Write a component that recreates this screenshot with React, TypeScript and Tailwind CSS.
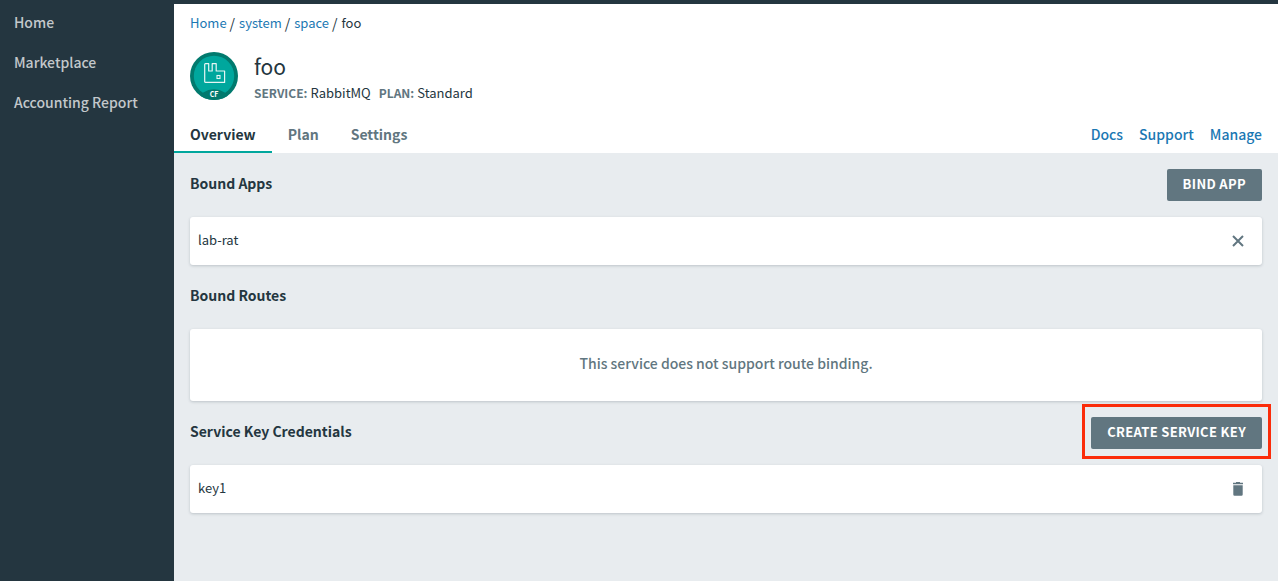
import type { ReactNode } from "react";

const navItems = ["Home", "Marketplace", "Accounting Report"];
const crumbs = ["Home", "system", "space"];
const links = ["Docs", "Support", "Manage"];

function ServiceLogo() {
  return (
    <svg viewBox="0 0 48 48" className="size-12 shrink-0" role="img" aria-label="RabbitMQ">
      <defs>
        <clipPath id="disc">
          <circle cx="24" cy="24" r="24" />
        </clipPath>
      </defs>
      <circle cx="24" cy="24" r="24" fill="#017a6e" />
      <circle cx="24" cy="24" r="20.2" fill="#00a79d" />
      <ellipse cx="24" cy="47" rx="14.5" ry="9.7" fill="#017a6e" clipPath="url(#disc)" />
      <path
        d="M15.4 11.7h3.3v7.3h3.5v-7.3h4v7.3h8.4v11.4H15.4a.7.7 0 0 1-.7-.7V12.4a.7.7 0 0 1 .7-.7z"
        fill="none"
        stroke="#e6f6f4"
        strokeWidth="1.2"
        strokeLinejoin="round"
      />
      <rect x="27" y="23.5" width="3" height="3" fill="none" stroke="#e6f6f4" strokeWidth="1.1" />
      <text x="24" y="45" textAnchor="middle" fontSize="7" fontWeight="700" fill="#fff">
        CF
      </text>
    </svg>
  );
}

function ActionButton({ children }: { children: ReactNode }) {
  return (
    <button
      type="button"
      className="h-8 rounded-xs bg-[#617680] px-4 pb-0.5 text-[13px] leading-6 font-bold tracking-wide text-white uppercase"
    >
      {children}
    </button>
  );
}

function Section({ title, action, children }: { title: string; action?: ReactNode; children: ReactNode }) {
  return (
    <section className="flex flex-col gap-4">
      <div className="flex h-8 items-center justify-between">
        <h2 className="pb-1 text-sm leading-6 font-bold">{title}</h2>
        {action}
      </div>
      <div className="rounded-[3px] bg-white shadow-[0_1px_3px_rgba(36,54,64,0.22)]">{children}</div>
    </section>
  );
}

function Row({ name, action, icon }: { name: string; action: string; icon: ReactNode }) {
  return (
    <div className="flex h-12 items-center justify-between pr-4 pl-2">
      <span className="pb-0.5 text-[13px] leading-5">{name}</span>
      <button type="button" aria-label={action} className="text-[#617680]">
        {icon}
      </button>
    </div>
  );
}

export default function App() {
  return (
    <div className="flex min-h-screen flex-col bg-[#e8ecef] font-['Noto_Sans_CJK_JP','Noto_Sans_CJK_SC',sans-serif] text-[#243640]">
      <div className="h-1 bg-[#243640]" />
      <div className="flex grow">
        <nav className="w-[174px] shrink-0 bg-[#243640] text-sm text-[#c3c8cb]">
          <ul>
            {navItems.map((item) => (
              <li key={item}>
                <a href="#" className="block px-[14px] pt-1.5 pb-2.5 leading-6 font-medium">
                  {item}
                </a>
              </li>
            ))}
          </ul>
        </nav>
        <div className="min-w-0 grow">
          <header className="bg-white">
            <nav aria-label="Breadcrumb" className="px-4 pt-[9px] text-[13px] leading-5">
              <ol className="flex gap-1">
                {crumbs.map((crumb) => (
                  <li key={crumb} className="flex gap-[3px]">
                    <a href="#" className="text-[#1b78b3]">
                      {crumb}
                    </a>
                    <span className="text-sm leading-5">/</span>
                  </li>
                ))}
                <li aria-current="page">foo</li>
              </ol>
            </nav>
            <div className="flex gap-4 px-4 pt-[19px]">
              <ServiceLogo />
              <div>
                <h1 className="pb-0.5 text-[21px] leading-7">foo</h1>
                <dl className="flex gap-2 pt-px text-[13px] leading-5">
                  <div className="flex gap-[3px]">
                    <dt className="text-xs leading-5 font-bold text-[#617680]">SERVICE:</dt>
                    <dd>RabbitMQ</dd>
                  </div>
                  <div className="flex gap-[3px]">
                    <dt className="text-xs leading-5 font-bold text-[#617680]">PLAN:</dt>
                    <dd>Standard</dd>
                  </div>
                </dl>
              </div>
            </div>
            <div className="flex items-end justify-between pt-[13px] text-sm leading-6">
              <div role="tablist" className="flex font-bold text-[#617680]">
                <button
                  type="button"
                  role="tab"
                  aria-selected="true"
                  className="border-b-2 border-[#00a79d] px-4 pt-1.5 pb-[5px] text-[#243640]"
                >
                  Overview
                </button>
                <button type="button" role="tab" aria-selected="false" className="px-4 pt-1.5 pb-[7px]">
                  Plan
                </button>
                <button type="button" role="tab" aria-selected="false" className="px-4 pt-1.5 pb-[7px]">
                  Settings
                </button>
              </div>
              <div className="flex gap-4 px-4 pb-[7px] font-medium text-[#1b78b3]">
                {links.map((link) => (
                  <a key={link} href="#">
                    {link}
                  </a>
                ))}
              </div>
            </div>
          </header>
          <main className="flex flex-col gap-4 p-4">
            <Section title="Bound Apps" action={<ActionButton>Bind App</ActionButton>}>
              <Row
                name="lab-rat"
                action="Unbind lab-rat"
                icon={
                  <svg viewBox="0 0 16 16" className="size-4" fill="none" stroke="currentColor" strokeWidth="2">
                    <path d="M3 3l10 10M13 3L3 13" />
                  </svg>
                }
              />
            </Section>
            <Section title="Bound Routes">
              <p className="pt-[22px] pb-[26px] text-center text-sm leading-6 font-medium text-[#617680]">
                This service does not support route binding.
              </p>
            </Section>
            <Section
              title="Service Key Credentials"
              action={
                <div className="relative">
                  <ActionButton>Create Service Key</ActionButton>
                  <div className="pointer-events-none absolute -inset-x-[9px] -top-[13px] -bottom-[10px] border-3 border-[#fb2c0a]" />
                </div>
              }
            >
              <Row
                name="key1"
                action="Delete key1"
                icon={
                  <svg viewBox="0 0 16 16" className="size-4" fill="currentColor">
                    <path d="M6 1h4v.8h3v1.5H3V1.8h3z" />
                    <path d="M3.3 4.2h9.4V13.5a1.2 1.2 0 0 1-1.2 1.2h-7a1.2 1.2 0 0 1-1.2-1.2z" />
                  </svg>
                }
              />
            </Section>
          </main>
        </div>
      </div>
    </div>
  );
}
